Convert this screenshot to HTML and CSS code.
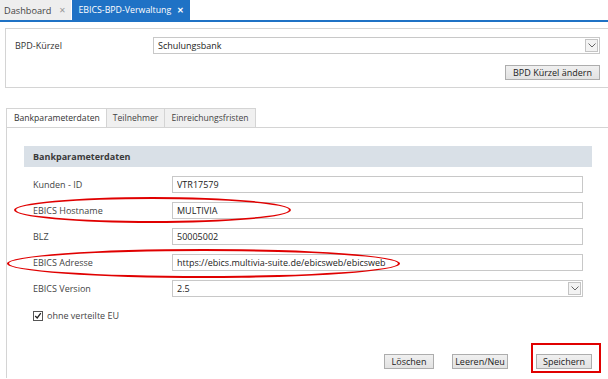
FILE: index.html
```html
<!DOCTYPE html>
<html lang="de">
<head>
  <meta charset="UTF-8">
  <title>EBICS-BPD-Verwaltung</title>
  <link rel="stylesheet" href="styles.css">
</head>
<body>
  <div class="doc-tabs">
    <div class="doc-tab">Dashboard <span class="close">&#x2715;</span></div>
    <div class="doc-tab active">EBICS-BPD-Verwaltung <span class="close">&#x2715;</span></div>
  </div>

  <div class="bpd-box">
    <div class="form-row">
      <label class="bpd-label">BPD-Kürzel</label>
      <div class="select wide">
        <span>Schulungsbank</span>
        <span class="arrow"><svg width="8" height="5" viewBox="0 0 8 5"><path d="M0.5 0.5 L4 4 L7.5 0.5" fill="none" stroke="#666" stroke-width="1"/></svg></span>
      </div>
    </div>
    <div class="button-row">
      <button class="btn">BPD Kürzel ändern</button>
    </div>
  </div>

  <div class="tabs">
    <div class="tab active">Bankparameterdaten</div>
    <div class="tab">Teilnehmer</div>
    <div class="tab">Einreichungsfristen</div>
  </div>

  <div class="tab-pane">
    <div class="section-title">Bankparameterdaten</div>

    <div class="field">
      <label>Kunden - ID</label>
      <input type="text" value="VTR17579">
    </div>
    <div class="field">
      <label>EBICS Hostname</label>
      <input type="text" value="MULTIVIA">
    </div>
    <div class="field">
      <label>BLZ</label>
      <input type="text" value="50005002">
    </div>
    <div class="field">
      <label>EBICS Adresse</label>
      <input type="text" value="https://ebics.multivia-suite.de/ebicsweb/ebicsweb">
    </div>
    <div class="field">
      <label>EBICS Version</label>
      <div class="select">
        <span>2.5</span>
        <span class="arrow"><svg width="8" height="5" viewBox="0 0 8 5"><path d="M0.5 0.5 L4 4 L7.5 0.5" fill="none" stroke="#666" stroke-width="1"/></svg></span>
      </div>
    </div>

    <div class="check-row">
      <span class="checkbox"><svg width="10" height="10" viewBox="0 0 10 10"><path d="M1.5 5 L4 7.5 L8.5 1.5" fill="none" stroke="#222" stroke-width="1.6"/></svg></span>
      <span>ohne verteilte EU</span>
    </div>

    <div class="actions">
      <button class="btn btn-delete">Löschen</button>
      <button class="btn btn-new">Leeren/Neu</button>
      <button class="btn btn-save">Speichern</button>
    </div>
  </div>

  <!-- red annotations drawn over the form -->
  <div class="mark mark-host"></div>
  <div class="mark mark-address"></div>
  <div class="mark-box"></div>
</body>
</html>
```

FILE: styles.css
```css
body {
  margin: 0;
  font-family: "Open Sans", "Noto Sans", sans-serif;
  font-size: 9px;
  color: #333;
  background: #fff;
  position: relative;
}

.doc-tabs {
  display: flex;
  height: 20px;
  border-bottom: 2px solid #1f72c5;
}

.doc-tab {
  display: flex;
  align-items: center;
  gap: 8px;
  white-space: nowrap;
  padding: 0 5px 0 4px;
  background: #eeeeee;
  color: #444;
  font-size: 9.2px;
}

.doc-tab .close {
  color: #999;
  font-size: 7.5px;
}

.doc-tab.active {
  margin-left: 1px;
  gap: 6px;
  background: #1f72c5;
  color: #fff;
  padding: 0 6px 0 6px;
  font-size: 8.8px;
}

.doc-tab.active .close {
  color: #fff;
  font-weight: bold;
}

.bpd-box {
  margin: 6px 0 0 5px;
  border: 1px solid #d4d4d4;
  border-right: none;
  padding: 8px 8px 7px 9px;
}

.form-row {
  display: flex;
  align-items: center;
}

.bpd-label {
  width: 138px;
}

.select {
  flex: 1;
  height: 17px;
  box-sizing: border-box;
  border: 1px solid #c8c8c8;
  display: flex;
  align-items: center;
  justify-content: space-between;
  padding: 0 1px 0 4px;
  background: #fff;
  color: #222;
}

.arrow {
  width: 13px;
  height: 13px;
  box-sizing: border-box;
  border: 1px solid #c4c4c4;
  background: #f3f3f3;
  display: flex;
  align-items: center;
  justify-content: center;
}

.button-row {
  display: flex;
  justify-content: flex-end;
  margin-top: 11px;
}

.btn {
  font-family: inherit;
  font-size: 9px;
  color: #222;
  height: 15px;
  padding: 0 7px;
  border: 1px solid #adadad;
  background: linear-gradient(#f0f0f0, #e2e2e2);
  line-height: 13px;
}

.tabs {
  display: flex;
  margin: 20px 0 0 6px;
  height: 19px;
}

.tab {
  display: flex;
  align-items: center;
  padding: 0 6px;
  border: 1px solid #d4d4d4;
  border-left: none;
  border-bottom: none;
  background: #f0f0f0;
  color: #444;
  font-size: 8.6px;
}

.tab.active {
  border-left: 1px solid #d4d4d4;
  background: #fff;
  color: #333;
  padding: 0 6px 0 7px;
}

.tab-pane {
  margin-left: 6px;
  border-top: 1px solid #d4d4d4;
  border-left: 1px solid #d4d4d4;
  padding: 18px 16px 0 17px;
  height: 232px;
}

.section-title {
  background: #d9e0e7;
  height: 21px;
  display: flex;
  align-items: center;
  padding-left: 9px;
  font-weight: bold;
  color: #3a3a3a;
  margin-bottom: 9px;
}

.field {
  display: flex;
  align-items: center;
  margin-bottom: 9px;
  padding: 0 9px;
}

.field label {
  width: 139px;
  color: #444;
}

.field input {
  flex: 1;
  height: 17px;
  box-sizing: border-box;
  border: 1px solid #c8c8c8;
  padding: 0 4px;
  font-family: inherit;
  font-size: 9px;
  color: #222;
  outline: none;
}

.check-row {
  display: flex;
  align-items: center;
  gap: 4px;
  margin: 12px 0 0 9px;
  color: #444;
}

.checkbox {
  width: 10px;
  height: 10px;
  box-sizing: border-box;
  border: 1px solid #555;
  display: flex;
  align-items: center;
  justify-content: center;
  background: #fff;
}

.actions {
  display: flex;
  justify-content: flex-end;
  margin-top: 32px;
}

.btn-delete,
.btn-new,
.btn-save {
  padding: 0;
}

.btn-delete {
  width: 50px;
  margin-right: 18px;
}

.btn-new {
  width: 56px;
  margin-right: 28px;
}

.btn-save {
  width: 56px;
}

.mark {
  position: absolute;
  border: 2px solid #e00000;
  border-radius: 50%;
  box-sizing: border-box;
}

.mark-host {
  left: 14px;
  top: 197px;
  width: 277px;
  height: 26px;
}

.mark-address {
  left: 7px;
  top: 249px;
  width: 393px;
  height: 29px;
}

.mark-box {
  position: absolute;
  left: 531px;
  top: 343px;
  width: 70px;
  height: 30px;
  box-sizing: border-box;
  border: 2px solid #e00000;
}
```
